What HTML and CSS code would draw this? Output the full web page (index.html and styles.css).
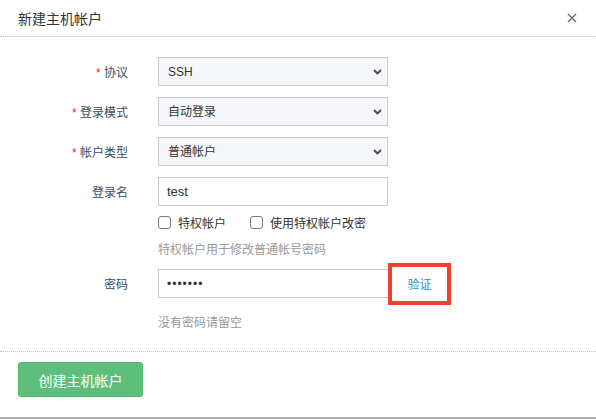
FILE: index.html
```html
<!DOCTYPE html>
<html lang="zh-CN">
<head>
    <meta charset="UTF-8">
    <meta name="viewport" content="width=device-width, initial-scale=1.0">
    <title>新建主机帐户</title>
    <link rel="stylesheet" href="styles.css">
</head>
<body>

    <div class="modal">

        <div class="modal-header">
            <h3 class="modal-title">新建主机帐户</h3>
            <span class="close">
                <svg width="10" height="10" viewBox="0 0 10 10">
                    <path d="M1 1 L9 9 M9 1 L1 9" stroke="#6b6b6b" stroke-width="1.4" fill="none"/>
                </svg>
            </span>
        </div>

        <div class="modal-body">

            <div class="form-row">
                <label class="label"><em>*</em> 协议</label>
                <div class="select">
                    <select><option>SSH</option></select>
                    <svg class="chevron" width="9" height="6" viewBox="0 0 9 6">
                        <path d="M1 1 L4.5 4.5 L8 1" stroke="#444" stroke-width="1.8" fill="none"/>
                    </svg>
                </div>
            </div>

            <div class="form-row">
                <label class="label"><em>*</em> 登录模式</label>
                <div class="select">
                    <select><option>自动登录</option></select>
                    <svg class="chevron" width="9" height="6" viewBox="0 0 9 6">
                        <path d="M1 1 L4.5 4.5 L8 1" stroke="#444" stroke-width="1.8" fill="none"/>
                    </svg>
                </div>
            </div>

            <div class="form-row">
                <label class="label"><em>*</em> 帐户类型</label>
                <div class="select">
                    <select><option>普通帐户</option></select>
                    <svg class="chevron" width="9" height="6" viewBox="0 0 9 6">
                        <path d="M1 1 L4.5 4.5 L8 1" stroke="#444" stroke-width="1.8" fill="none"/>
                    </svg>
                </div>
            </div>

            <div class="form-row form-row-name">
                <label class="label">登录名</label>
                <input class="input" type="text" value="test">
            </div>

            <div class="checks">
                <label class="check"><span class="box"></span>特权帐户</label>
                <label class="check"><span class="box"></span>使用特权帐户改密</label>
            </div>

            <p class="help help-first">特权帐户用于修改普通帐号密码</p>

            <div class="form-row form-row-pwd">
                <label class="label">密码</label>
                <div class="pwd-group">
                    <input class="input" type="password" value="1234567">
                    <a class="verify">验证</a>
                </div>
            </div>

            <p class="help help-last">没有密码请留空</p>

        </div>

        <div class="modal-footer">
            <button class="btn-create">创建主机帐户</button>
        </div>

    </div>

</body>
</html>
```

FILE: styles.css
```css
* {
    margin: 0;
    padding: 0;
    box-sizing: border-box;
    font-family: "Liberation Sans", "Noto Sans CJK SC", sans-serif;
}

body {
    background-color: white;
}

.modal {
    width: 596px;
    height: 419px;
    background-color: white;
    border-bottom: 2px solid #ababab;
    display: flex;
    flex-direction: column;
}

.modal-header {
    height: 37px;
    padding: 0 17px 0 18px;
    display: flex;
    align-items: center;
    justify-content: space-between;
    border-bottom: 1px dotted #c4c4c4;
}

.modal-title {
    font-size: 14px;
    font-weight: normal;
    color: #333;
}

.close {
    display: flex;
    margin-right: 2px;
}

.modal-body {
    padding: 20px 0 19px 0;
    border-bottom: 1px dotted #c4c4c4;
}

.form-row {
    display: flex;
    align-items: center;
    height: 29px;
    margin-bottom: 11px;
}

.form-row-name {
    margin-bottom: 6px;
}

.label {
    width: 128px;
    margin-right: 30px;
    text-align: right;
    font-size: 12px;
    color: #3b4d62;
}

.label em {
    font-style: normal;
    color: #e0392b;
}

.select {
    position: relative;
    width: 230px;
    height: 29px;
}

.select select {
    appearance: none;
    width: 100%;
    height: 100%;
    padding-left: 9px;
    font-size: 12px;
    color: #333;
    background-color: #f6f7fb;
    border: 1px solid #c9c9cc;
    border-radius: 0;
    outline: none;
}

.chevron {
    position: absolute;
    right: 6px;
    top: 12px;
}

.input {
    width: 230px;
    height: 29px;
    padding-left: 8px;
    font-size: 13px;
    color: #333;
    background-color: white;
    border: 1px solid #c9c9cc;
    outline: none;
}

.checks {
    display: flex;
    gap: 24px;
    margin-left: 158px;
    height: 20px;
    align-items: center;
}

.check {
    display: flex;
    align-items: center;
    font-size: 12px;
    color: #333;
}

.box {
    width: 13px;
    height: 13px;
    border: 1px solid #7c7c7c;
    border-radius: 3px;
    margin-right: 7px;
}

.help {
    margin-left: 158px;
    font-size: 12px;
    line-height: 18px;
    color: #999;
}

.help-first {
    margin-top: 9px;
}

.form-row-pwd {
    margin-top: 10px;
    margin-bottom: 0;
}

.pwd-group {
    display: flex;
    height: 29px;
}

.pwd-group .input {
    border-right: none;
    font-size: 12px;
    letter-spacing: 1px;
}

.verify {
    position: relative;
    width: 63px;
    display: flex;
    align-items: center;
    justify-content: center;
    font-size: 12px;
    color: #2d8ed6;
}

/* red marker drawn round the verify link */
.verify::after {
    content: "";
    box-sizing: border-box;
    position: absolute;
    left: 0;
    top: -6px;
    width: 63px;
    height: 42px;
    border: 4px solid #f0402e;
}

.help-last {
    margin-top: 16px;
}

.modal-footer {
    padding: 10px 18px;
}

.btn-create {
    width: 125px;
    height: 35px;
    font-size: 14px;
    color: white;
    background-color: #5dbf7b;
    border: 1px solid #52b570;
    border-radius: 3px;
}
```
